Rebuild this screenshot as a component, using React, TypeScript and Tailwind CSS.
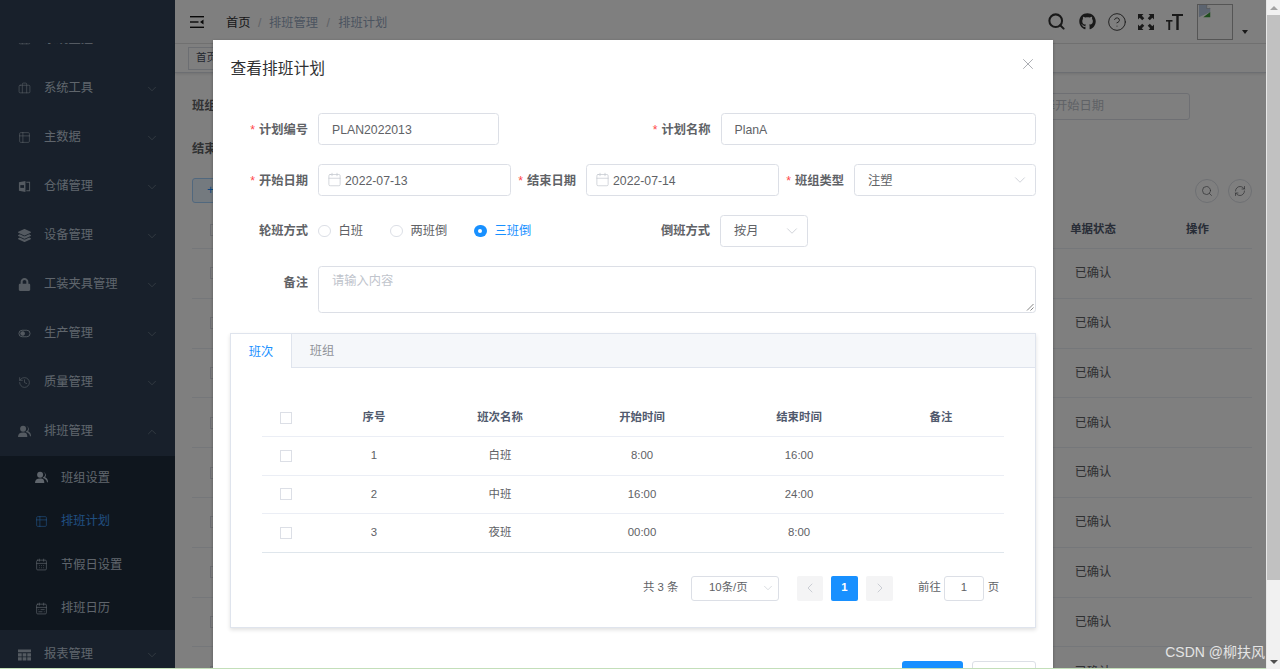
import { ReactNode } from "react";
import { Briefcase, Calendar, CalendarDays, CalendarRange, ChevronDown, ChevronLeft, ChevronRight, ChevronUp, CircleHelp, History, Search, RefreshCw, Table2, X } from "lucide-react";
import { FaGithub, FaLayerGroup, FaLock } from "react-icons/fa";

const font = '"Liberation Sans", "Noto Sans CJK SC", sans-serif';

function WarehouseIcon() {
  return (
    <svg viewBox="0 0 14 14" className="h-[13px] w-[13px]" fill="currentColor">
      <path d="M1 2.500 8 1v12l-7-1.500z" />
      <path d="M9 2h4v10H9v-1h3V3H9z" />
      <rect x="2.500" y="5.500" width="4" height="3" fill="#304156" />
    </svg>
  );
}

function EyeIcon() {
  return (
    <svg viewBox="0 0 14 14" className="h-[13px] w-[13px]" fill="none" stroke="currentColor">
      <rect x="1" y="3.500" width="12" height="7" rx="3.500" />
      <circle cx="5" cy="7" r="2" fill="currentColor" />
    </svg>
  );
}

function PeopleIcon() {
  return (
    <svg viewBox="0 0 14 14" className="h-[13px] w-[13px]" fill="currentColor">
      <circle cx="5.500" cy="4" r="3.200" />
      <path d="M0 13c0-3.500 2-5 5.500-5S10 9.500 10 13z" />
      <path d="M9 1.200a3 3 0 0 1 0 5.600c-.3.300-.5.500-.8.700 2.800.5 4.200 2 4.800 4.500h1c0-2.800-1.200-4.500-3.200-5.200a3.400 3.400 0 0 0-1.800-5.600z" />
    </svg>
  );
}

function GridIcon() {
  return (
    <svg viewBox="0 0 14 12" className="h-[12px] w-[13px]" fill="currentColor">
      <path d="M0 0h14v3H0zM0 4h4v3.500H0zM5 4h4v3.500H5zM10 4h4v3.500h-4zM0 8.500h4V12H0zM5 8.500h4V12H5zM10 8.500h4V12h-4z" />
    </svg>
  );
}

function MenuItem({ icon, label, open }: { icon: ReactNode; label: string; open?: boolean }) {
  return (
    <div className="flex h-[49px] shrink-0 items-center pl-[18px] pr-[16px] text-[12.25px] text-[#bfcbd9]">
      <span className="flex w-[26px] shrink-0 items-center text-[#a9b5c2]">{icon}</span>
      <span className="flex-1">{label}</span>
      {open ? (
        <ChevronUp className="h-[14px] w-[14px] text-[#8a96a3]" strokeWidth={1} />
      ) : (
        <ChevronDown className="h-[14px] w-[14px] text-[#8a96a3]" strokeWidth={1} />
      )}
    </div>
  );
}

function SubItem({ icon, label, active }: { icon: ReactNode; label: string; active?: boolean }) {
  return (
    <div className={`flex h-[43.5px] items-center pl-[35px] text-[12.25px] ${active ? "text-[#409eff]" : "text-[#bfcbd9]"}`}>
      <span className="flex w-[26px] shrink-0 items-center">{icon}</span>
      <span>{label}</span>
    </div>
  );
}

function Sidebar() {
  return (
    <aside className="flex h-full w-[175px] shrink-0 flex-col overflow-hidden bg-[#304156] pt-[43px]">
      <div className="-mt-[28px] flex flex-col [clip-path:inset(28px_0_0_0)]">
        <MenuItem icon={<Briefcase className="h-[13px] w-[13px]" strokeWidth={1.2} />} label="系统监控" />
        <MenuItem icon={<Briefcase className="h-[13px] w-[13px]" strokeWidth={1.2} />} label="系统工具" />
        <MenuItem icon={<Table2 className="h-[13px] w-[13px]" strokeWidth={1.2} />} label="主数据" />
        <MenuItem icon={<WarehouseIcon />} label="仓储管理" />
        <MenuItem icon={<FaLayerGroup className="h-[13px] w-[13px]" />} label="设备管理" />
        <MenuItem icon={<FaLock className="h-[13px] w-[13px]" />} label="工装夹具管理" />
        <MenuItem icon={<EyeIcon />} label="生产管理" />
        <MenuItem icon={<History className="h-[13px] w-[13px]" strokeWidth={1.2} />} label="质量管理" />
        <MenuItem icon={<PeopleIcon />} label="排班管理" open />
        <div className="bg-[#1f2d3d]">
          <SubItem icon={<PeopleIcon />} label="班组设置" />
          <SubItem icon={<Table2 className="h-[13px] w-[13px]" strokeWidth={1.2} />} label="排班计划" active />
          <SubItem icon={<CalendarDays className="h-[13px] w-[13px]" strokeWidth={1.2} />} label="节假日设置" />
          <SubItem icon={<CalendarRange className="h-[13px] w-[13px]" strokeWidth={1.2} />} label="排班日历" />
        </div>
        <MenuItem icon={<GridIcon />} label="报表管理" />
      </div>
    </aside>
  );
}

function Navbar() {
  return (
    <header className="flex h-[44px] shrink-0 items-center border-b border-[#e6e6e6] pl-[15px] text-[#5a5e66]">
      <svg viewBox="0 0 14 12" className="h-[12px] w-[14px] text-[#111]" fill="currentColor">
        <rect width="14" height="1.400" />
        <rect y="5.300" width="8.500" height="1.400" />
        <rect y="10.600" width="14" height="1.400" />
        <path d="M10 6l3.500-2.500v5z" />
      </svg>
      <nav className="ml-[22px] mt-[3px] flex items-center text-[12.25px] text-[#97a8be]">
        <span className="text-[#303133]">首页</span>
        <span className="mx-[7.500px] text-[#c0c4cc]">/</span>
        <span>排班管理</span>
        <span className="mx-[8.500px] text-[#c0c4cc]">/</span>
        <span>排班计划</span>
      </nav>
      <div className="ml-auto flex items-center">
        <Search className="h-[19px] w-[19px] text-[#333]" strokeWidth={2.6} />
        <FaGithub className="ml-[13px] h-[17px] w-[17px] text-[#333]" />
        <CircleHelp className="ml-[11px] h-[20px] w-[20px] text-[#333]" strokeWidth={1.1} />
        <svg viewBox="0 0 16 16" className="ml-[11px] h-[16px] w-[16px] text-[#333]" fill="currentColor">
          <path d="M0 0h5.500L3.800 1.700 6.300 4.200 4.200 6.300 1.700 3.800 0 5.500zM16 0v5.500l-1.700-1.700-2.500 2.500-2.100-2.100 2.500-2.500L10.500 0zM0 16v-5.500l1.700 1.700 2.500-2.500 2.100 2.100-2.500 2.500L5.500 16zM16 16h-5.500l1.700-1.700-2.500-2.500 2.100-2.100 2.500 2.500 1.700-1.700z" />
        </svg>
        <svg viewBox="0 0 17 16" className="ml-[12px] h-[16px] w-[17px] text-[#333]" fill="currentColor">
          <rect x="6" y="0" width="11" height="2" />
          <rect x="10.300" y="0" width="2.400" height="16" />
          <rect x="0" y="6" width="6.500" height="1.600" />
          <rect x="2.300" y="6" width="1.900" height="10" />
        </svg>
        <div className="ml-[14px] mt-px h-[36px] w-[36px] border border-[#aaa]">
          <svg viewBox="0 0 16 16" className="h-[14px] w-[14px]">
            <path d="M1 0h9l4 4v4L1 14z" fill="#b9c8e0" />
            <path d="M6 14l8-6v6z" fill="#3c9a3c" />
            <path d="M10 0v4h4" fill="#fff" stroke="#888" strokeWidth="0.500" />
          </svg>
        </div>
        <div className="ml-[9px] mr-[18px] mt-[20px] h-0 w-0 border-x-[3.500px] border-t-[4px] border-x-transparent border-t-[#333]" />
      </div>
    </header>
  );
}

function BackgroundPage() {
  const rows = Array.from({ length: 9 }, (_, i) => i);
  return (
    <main className="flex min-w-0 flex-1 flex-col bg-white">
      <Navbar />
      <div className="flex h-[29px] shrink-0 items-center border-b border-[#d8dce5] pl-[13px] shadow-[0_1px_3px_rgba(0,0,0,0.12)]">
        <span className="flex h-[23px] items-center border border-[#d8dce5] px-[7px] text-[10.500px] text-[#495060]">首页</span>
      </div>
      <section className="flex flex-1 flex-col pl-[17px] pr-[14px] text-[12.25px] text-[#606266]">
        <div className="mt-[20px] flex h-[27px] items-center">
          <b>班组</b>
          <div className="ml-auto mr-[62px] flex h-[27px] w-[200px] items-center justify-end rounded-[3px] border border-[#dcdfe6] pr-[85px] text-[#c0c4cc]">
            请选择开始日期
          </div>
        </div>
        <div className="mt-[16px] flex h-[27px] items-center">
          <b>结束</b>
        </div>
        <div className="mt-[15px] flex h-[25px] items-center">
          <span className="flex h-[25px] w-[70px] items-center rounded-[3px] border border-[#a3d0fd] bg-[#e8f4ff] pl-[14px] text-[#1890ff]">+ 新增</span>
          <span className="ml-auto flex h-6 w-6 items-center justify-center rounded-full border border-[#dcdfe6]">
            <Search className="h-3 w-3" strokeWidth={1.4} />
          </span>
          <span className="ml-[9px] flex h-6 w-6 items-center justify-center rounded-full border border-[#dcdfe6]">
            <RefreshCw className="h-3 w-3" strokeWidth={1.4} />
          </span>
        </div>
        <div className="mt-[8px] flex h-[38px] items-center border-b border-[#ebeef5] text-[11.4px] font-bold text-[#515a6e]">
          <span className="ml-[18px] h-3 w-3 border border-[#dcdfe6]" />
          <span className="ml-auto w-[116px] text-center">单据状态</span>
          <span className="w-[101px] pr-[8px] text-center">操作</span>
        </div>
        {rows.map((r) => (
          <div key={r} className="flex h-[49.800px] shrink-0 items-center border-b border-[#ebeef5]">
            <span className="ml-[18px] h-3 w-3 border border-[#dcdfe6]" />
            <span className="ml-auto w-[116px] text-center">已确认</span>
            <span className="w-[101px]" />
          </div>
        ))}
      </section>
    </main>
  );
}

function Label({ text, required, width }: { text: string; required?: boolean; width: string }) {
  return (
    <label className={`shrink-0 pr-[10px] text-right text-[12.25px] font-bold text-[#606266] ${width}`}>
      {required && <span className="mr-[4px] font-normal text-[#ff4949]">*</span>}
      {text}
    </label>
  );
}

function Box({ children, width }: { children: ReactNode; width: string }) {
  return (
    <div className={`flex h-[31.500px] shrink-0 items-center rounded-[3.500px] border border-[#dcdfe6] bg-white text-[12.25px] text-[#606266] ${width}`}>
      {children}
    </div>
  );
}

function DateBox({ value, width }: { value: string; width: string }) {
  return (
    <Box width={width}>
      <Calendar className="ml-[8px] mr-[3px] h-[15px] w-[15px] text-[#c0c4cc]" strokeWidth={1.1} />
      <span className="pt-[2px]">{value}</span>
    </Box>
  );
}

function SelectBox({ value, width }: { value: string; width: string }) {
  return (
    <Box width={width}>
      <span className="pl-[13px]">{value}</span>
      <ChevronDown className="ml-auto mr-[6px] h-[18px] w-[18px] text-[#c0c4cc]" strokeWidth={1} />
    </Box>
  );
}

function Radio({ label, checked, className }: { label: string; checked?: boolean; className: string }) {
  return (
    <span className={`flex items-center text-[12.25px] ${checked ? "text-[#1890ff]" : "text-[#606266]"} ${className}`}>
      {checked ? (
        <span className="flex h-[12.500px] w-[12.500px] items-center justify-center rounded-full bg-[#1890ff]">
          <span className="h-[4px] w-[4px] rounded-full bg-white" />
        </span>
      ) : (
        <span className="h-[12.500px] w-[12.500px] rounded-full border border-[#dcdfe6] bg-white" />
      )}
      <span className="ml-[8px]">{label}</span>
    </span>
  );
}

const shifts = [
  { no: 1, name: "白班", start: "8:00", end: "16:00" },
  { no: 2, name: "中班", start: "16:00", end: "24:00" },
  { no: 3, name: "夜班", start: "00:00", end: "8:00" },
];

function ShiftTable() {
  const check = <span className="mx-auto block h-3 w-3 border border-[#dcdfe6] bg-white" />;
  const cols = "grid grid-cols-[48px_128px_124px_160px_154px_128px] items-center text-center";
  return (
    <div className="ml-[31px] w-[742px] pt-[30px] text-[11.400px]">
      <div className={`${cols} h-[39px] border-b border-[#ebeef5] pt-px font-bold text-[#515a6e]`}>
        {check}
        <span>序号</span>
        <span>班次名称</span>
        <span>开始时间</span>
        <span>结束时间</span>
        <span className="pl-[2px]">备注</span>
      </div>
      {shifts.map((s, i) => (
        <div key={s.no} className={`${cols} h-[38.500px] border-b text-[#606266] ${i === 2 ? "border-[#dfe6ec]" : "border-[#ebeef5]"}`}>
          {check}
          <span>{s.no}</span>
          <span>{s.name}</span>
          <span>{s.start}</span>
          <span>{s.end}</span>
          <span />
        </div>
      ))}
    </div>
  );
}

function Pagination() {
  return (
    <div className="mt-[23px] flex h-[25px] items-center pl-[412px] text-[11.400px] text-[#606266]">
      <span className="w-[48px]">共 3 条</span>
      <div className="flex h-[25px] w-[88px] items-center rounded-[3px] border border-[#dcdfe6] pl-[17px]">
        <span>10条/页</span>
        <ChevronDown className="ml-auto mr-[3px] h-[14px] w-[14px] text-[#c0c4cc]" strokeWidth={1} />
      </div>
      <span className="ml-[18px] flex h-[25px] w-[26px] items-center justify-center rounded-[2px] bg-[#f4f4f5] text-[#c0c4cc]">
        <ChevronLeft className="h-4 w-4" strokeWidth={1.2} />
      </span>
      <span className="ml-[8px] flex h-[25px] w-[27px] items-center justify-center rounded-[2px] bg-[#1890ff] font-bold text-white">1</span>
      <span className="ml-[8px] flex h-[25px] w-[27px] items-center justify-center rounded-[2px] bg-[#f4f4f5] text-[#c0c4cc]">
        <ChevronRight className="h-4 w-4" strokeWidth={1.2} />
      </span>
      <span className="ml-[25px]">前往</span>
      <span className="ml-[3px] flex h-[25px] w-[40px] items-center justify-center rounded-[3px] border border-[#dcdfe6]">1</span>
      <span className="ml-[4px]">页</span>
    </div>
  );
}

function PlanDialog() {
  return (
    <div className="absolute left-[213px] top-[40px] h-[700px] w-[840px] bg-white shadow-[0_1px_3px_rgba(0,0,0,0.3)]">
      <div className="flex h-[73px] items-start justify-between pl-[17.500px] pr-[16px] pt-[19px]">
        <h2 className="text-[15.750px] leading-[20px] text-[#303133]">查看排班计划</h2>
        <X className="-mt-[4px] h-[18px] w-[18px] text-[#909399]" strokeWidth={1} />
      </div>

      <div className="ml-[18px] w-[805px]">
        <div className="flex h-[31.500px] items-center [&_label]:pt-[2px]">
          <Label text="计划编号" required width="w-[87px]" />
          <Box width="w-[181px]">
            <span className="pl-[13px] pt-[2px]">PLAN2022013</span>
          </Box>
          <div className="ml-auto flex items-center">
            <Label text="计划名称" required width="w-[87px]" />
            <Box width="w-[315.500px]">
              <span className="pl-[13px] pt-[2px]">PlanA</span>
            </Box>
          </div>
        </div>

        <div className="mt-[19.500px] flex h-[31.500px] items-center [&_label]:pt-[2px]">
          <Label text="开始日期" required width="w-[87px]" />
          <DateBox value="2022-07-13" width="w-[192.500px]" />
          <Label text="结束日期" required width="w-[75.500px]" />
          <DateBox value="2022-07-14" width="w-[193px]" />
          <Label text="班组类型" required width="w-[75px]" />
          <Box width="w-[181.500px]">
            <span className="pl-[13px] pt-[2px]">注塑</span>
            <ChevronDown className="ml-auto mr-[6px] h-[18px] w-[18px] text-[#c0c4cc]" strokeWidth={1} />
          </Box>
        </div>

        <div className="mt-[19.500px] flex h-[31.500px] items-center">
          <Label text="轮班方式" width="w-[87px]" />
          <Radio label="白班" className="w-[72px]" />
          <Radio label="两班倒" className="w-[84px]" />
          <Radio label="三班倒" checked className="w-[100px]" />
          <Label text="倒班方式" width="w-[146px]" />
          <SelectBox value="按月" width="w-[88px]" />
        </div>

        <div className="mt-[19.500px] flex items-start">
          <div className="pt-[8px]">
            <Label text="备注" width="block w-[87px]" />
          </div>
          <div className="relative h-[46.500px] flex-1 rounded-[3.500px] border border-[#dcdfe6] pl-[13px] pt-[5px] text-[12.25px] text-[#c0c4cc]">
            请输入内容
            <svg viewBox="0 0 8 8" className="absolute bottom-[1px] right-[1px] h-2 w-2 text-[#666]" fill="none" stroke="currentColor" strokeWidth="0.800">
              <path d="M1 7.500 7.500 1M4.500 7.500 7.500 4.500" />
            </svg>
          </div>
        </div>

        <div className="-ml-px mt-[20px] h-[295.500px] w-[806px] border border-[#dfe4ed] bg-white shadow-[0_2px_4px_rgba(0,0,0,0.12)]">
          <div className="flex h-[34.500px] border-b border-[#dfe4ed] bg-[#f5f7fa] text-[12.25px]">
            <span className="flex h-[34.500px] w-[61px] items-center justify-center border-r border-[#dfe4ed] bg-white pt-[2px] text-[#1890ff]">班次</span>
            <span className="flex w-[60px] items-center justify-center pt-[2px] text-[#909399]">班组</span>
          </div>
          <ShiftTable />
          <Pagination />
        </div>

        <div className="mt-[33px] flex justify-end">
          <span className="flex h-[32px] w-[61px] items-center justify-center rounded-[3px] bg-[#1890ff] text-[12.25px] text-white">确 定</span>
          <span className="ml-[9px] flex h-[32px] w-[64px] items-center justify-center rounded-[3px] border border-[#dcdfe6] text-[12.25px] text-[#606266]">取 消</span>
        </div>
      </div>
    </div>
  );
}

function Scrollbar() {
  return (
    <div className="flex h-full w-[14px] shrink-0 flex-col border-l border-[#e8e8e8] bg-[#f1f1f1]">
      <div className="flex h-[15px] items-center justify-center">
        <div className="h-0 w-0 border-x-[4px] border-b-[4px] border-x-transparent border-b-[#a3a3a3]" />
      </div>
      <div className="h-[565px] bg-[#c1c1c1]" />
      <div className="flex flex-1 items-end justify-center pb-[5px]">
        <div className="h-0 w-0 border-x-[4px] border-t-[4px] border-x-transparent border-t-[#505050]" />
      </div>
    </div>
  );
}

export default function App() {
  return (
    <div className="relative flex h-[669px] w-[1280px] overflow-hidden bg-white" style={{ fontFamily: font }}>
      <div className="relative flex min-w-0 flex-1 overflow-hidden">
        <Sidebar />
        <BackgroundPage />
        <div className="absolute inset-0 bg-black/50" />
        <PlanDialog />
        <span className="absolute bottom-[8px] right-[1px] text-[14px] leading-[18px] text-[#e4e4e4]">CSDN @柳扶风</span>
      </div>
      <Scrollbar />
      <div className="absolute bottom-0 left-0 h-px w-[1266px] bg-[#c3dfb9]" />
    </div>
  );
}
